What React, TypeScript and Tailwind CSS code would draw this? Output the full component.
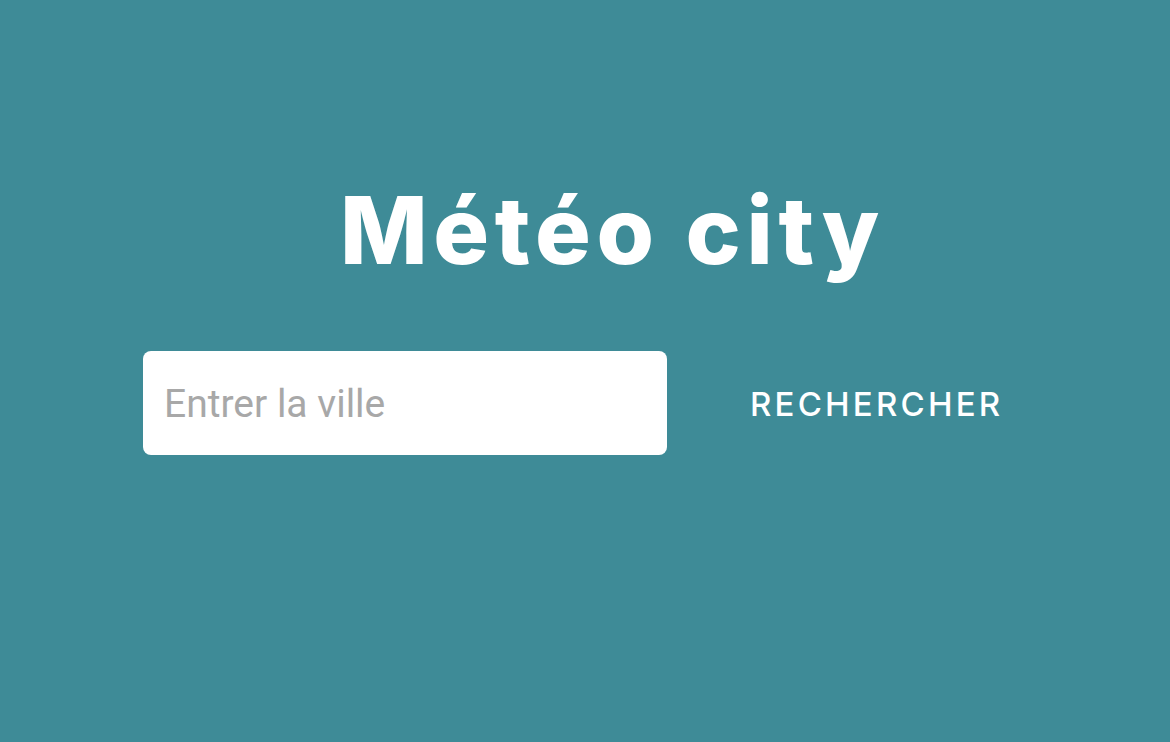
export default function App() {
  return (
    <div className="w-[1170px] h-[742px] bg-[#3e8b97] flex flex-col overflow-hidden">
      <h1 className="mt-[170px] ml-[340px] text-white text-[93px] leading-[120px] font-extrabold tracking-[5.6px] font-['Inter',sans-serif]">
        Météo city
      </h1>
      <div className="mt-[61px] ml-[143px] flex items-center">
        <input
          type="text"
          placeholder="Entrer la ville"
          className="w-[524px] h-[104px] bg-white rounded-[8px] px-[21px] pt-[2px] text-[39px] font-['Roboto',sans-serif] text-gray-700 placeholder:text-[#a8a8a8] outline-none"
        />
        <button className="ml-[83px] mt-[3px] text-white text-[33px] font-medium tracking-[3.2px] font-['Inter',sans-serif]">
          RECHERCHER
        </button>
      </div>
    </div>
  );
}
